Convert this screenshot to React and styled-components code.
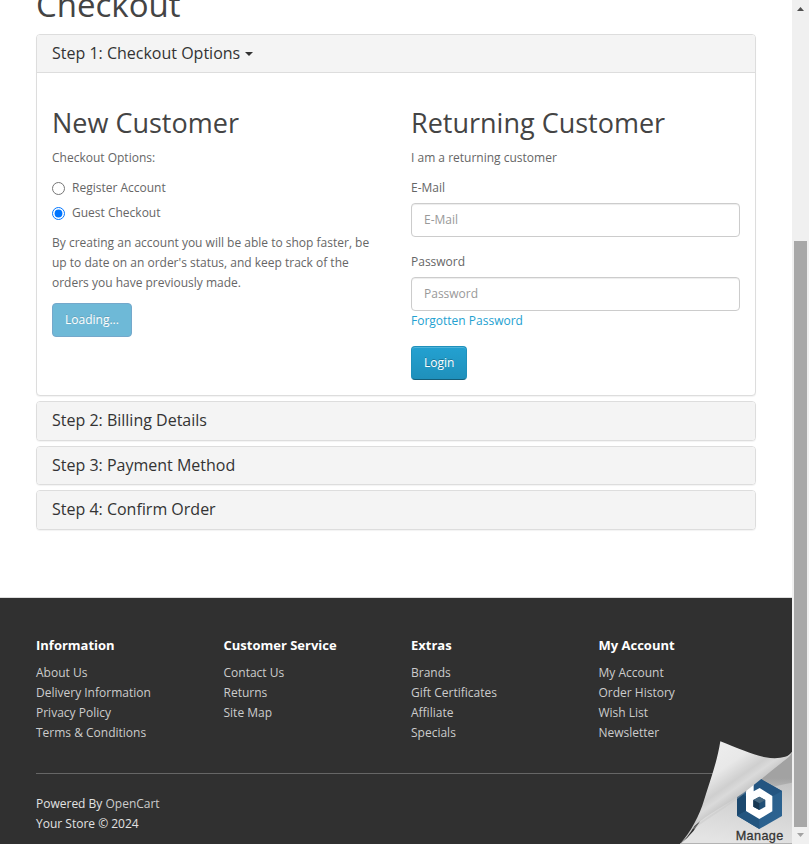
import React from "react";
import styled, { createGlobalStyle, css } from "styled-components";

const GlobalStyle = createGlobalStyle`
  *, *::before, *::after { box-sizing: border-box; }
  html, body { margin: 0; padding: 0; }
  body {
    background: #fff;
    color: #666;
    font-family: "Open Sans", sans-serif;
    font-size: 12px;
    font-weight: 400;
    line-height: 20px;
    overflow: hidden;
  }
`;

const Viewport = styled.div`
  display: flex;
  width: 809px;
  height: 844px;
  overflow: hidden;
`;

const Page = styled.div`
  position: relative;
  display: flex;
  flex-direction: column;
  width: 792px;
  height: 844px;
  overflow: hidden;
`;

const Content = styled.main`
  flex: none;
  height: 597px;
  padding: 0 36px;
`;

const PageTitle = styled.h1`
  margin: -13.3px 0 11px;
  color: #444;
  font-size: 33px;
  font-weight: 400;
  line-height: 1.1;
`;

const Panel = styled.section`
  margin-bottom: 5px;
  border: 1px solid #ddd;
  border-radius: 4px;
  background: #fff;
  box-shadow: 0 1px 1px rgba(0, 0, 0, 0.05);
`;

const PanelHeading = styled.h4`
  display: flex;
  align-items: center;
  margin: 0;
  padding: 10px 15px;
  border-radius: 3px;
  background: #f4f4f4;
  color: #333;
  font-size: 16px;
  font-weight: 400;
  line-height: 1.1;
  ${(p) =>
    p.$open &&
    css`
      padding-bottom: 9.4px;
      border-bottom: 1px solid #ddd;
      border-radius: 3px 3px 0 0;
    `}
`;

const Caret = styled.span`
  margin-left: 4.6px;
  margin-top: 1px;
  border-top: 4px solid #333;
  border-left: 4px solid transparent;
  border-right: 4px solid transparent;
`;

const PanelBody = styled.div`
  display: grid;
  grid-template-columns: 329px 329px;
  column-gap: 30px;
  padding: 15.6px 15px 15px;
`;

const Title = styled.h2`
  margin: 19.2px 0 10.8px;
  color: #444;
  font-size: 27px;
  font-weight: 400;
  line-height: 1.1;
`;

const Paragraph = styled.p`
  margin: 0 0 10px;
`;

const RadioRow = styled.label`
  display: flex;
  height: 20px;
  margin-bottom: ${(p) => (p.$last ? 10 : 5)}px;
`;

const Radio = styled.input`
  width: 13px;
  height: 13px;
  margin: 4px 7px 0 0;
`;

const Field = styled.div`
  margin-bottom: 15px;
`;

const Label = styled.label`
  display: block;
  margin-bottom: 5px;
`;

const Input = styled.input`
  display: block;
  width: 100%;
  height: 34px;
  padding: 5px 12px 7px;
  border: 1px solid #ccc;
  border-radius: 4px;
  background: #fff;
  box-shadow: inset 0 1px 1px rgba(0, 0, 0, 0.075);
  color: #555;
  font: inherit;
  &::placeholder { color: #999; }
`;

const TextLink = styled.a`
  display: block;
  color: #23a1d1;
`;

const Button = styled.button`
  display: block;
  height: 34px;
  padding: 6px 12px;
  border: 1px solid;
  border-color: #1f90bb #1f90bb #145e7a;
  border-radius: 4px;
  background: linear-gradient(#23a1d1, #1f90bb);
  color: #fff;
  font: inherit;
  text-shadow: 0 -1px 0 rgba(0, 0, 0, 0.25);
  box-shadow: inset 0 1px 0 rgba(255, 255, 255, 0.2);
  ${(p) =>
    p.disabled &&
    css`
      opacity: 0.65;
      border-color: #2a7ab0;
      background: #2194c2;
      box-shadow: none;
    `}
`;

const Footer = styled.footer`
  flex: 1;
  padding: 40px 36px 0;
  border-top: 1px solid #ddd;
  border-bottom: 1px solid #2c2126;
  background: #303030;
  color: #e2e2e2;
`;

const FooterGrid = styled.div`
  display: grid;
  grid-template-columns: repeat(4, 187.5px);
`;

const FooterTitle = styled.h5`
  margin: 0 0 10.7px;
  color: #fff;
  font-size: 13px;
  font-weight: 700;
  line-height: 1.1;
`;

const LinkList = styled.ul`
  margin: 0 0 10px;
  padding: 0;
  list-style: none;
`;

const FooterLink = styled.a`
  color: #ccc;
`;

const Rule = styled.hr`
  margin: 20px 0;
  border: 0;
  border-top: 1px solid #666;
`;

const CurlLink = styled.a`
  position: absolute;
  right: 0;
  bottom: 0;
  width: 112px;
  height: 103px;
  svg { display: block; }
`;

const ScrollTrack = styled.div`
  display: flex;
  flex-direction: column;
  align-items: center;
  width: 17px;
  height: 844px;
  background: #f0f0f0;
`;

const ScrollArrow = styled.svg`
  width: 17px;
  height: 17px;
  flex: none;
`;

const ScrollThumb = styled.div`
  width: 13px;
  height: 586px;
  margin-top: 224px;
  background: #a8a8a8;
`;

const footerColumns = [
  ["Information", ["About Us", "Delivery Information", "Privacy Policy", "Terms & Conditions"]],
  ["Customer Service", ["Contact Us", "Returns", "Site Map"]],
  ["Extras", ["Brands", "Gift Certificates", "Affiliate", "Specials"]],
  ["My Account", ["My Account", "Order History", "Wish List", "Newsletter"]],
];

function PageCurl() {
  return (
    <CurlLink aria-label="Manage">
      <svg width="112" height="103" viewBox="30 33 336 309">
        <defs>
          <linearGradient id="under" x1="0.7" y1="0.2" x2="0.55" y2="1">
            <stop offset="0" stopColor="#bdbdbd" />
            <stop offset="0.35" stopColor="#cfcfcf" />
            <stop offset="1" stopColor="#e4e4e4" />
          </linearGradient>
          <linearGradient id="fold" gradientUnits="userSpaceOnUse" x1="135" y1="70" x2="220" y2="190">
            <stop offset="0" stopColor="#ececec" />
            <stop offset="0.35" stopColor="#e8e8e8" />
            <stop offset="0.68" stopColor="#cfcfcf" />
            <stop offset="0.82" stopColor="#dadada" />
            <stop offset="1" stopColor="#c6c6c6" />
          </linearGradient>
          <linearGradient id="shade" x1="0" y1="0" x2="0" y2="1">
            <stop offset="0.7" stopColor="#a2a2a2" />
            <stop offset="1" stopColor="#a2a2a2" stopOpacity="0.35" />
          </linearGradient>
          <linearGradient id="hexBlue" x1="0" y1="0" x2="1" y2="1">
            <stop offset="0" stopColor="#1c4a70" />
            <stop offset="0.5" stopColor="#2a5f8c" />
            <stop offset="1" stopColor="#2d6492" />
          </linearGradient>
        </defs>
        <path d="M366 66L366 342H30Q78 306 100 252L347 86Z" fill="url(#under)" />
        <path d="M366 66L366 158Q320 166 285 178L240 175L349 86Z" fill="url(#shade)" />
        <path d="M269 145L336 183V258L268 297L201 257V184Z" fill="url(#hexBlue)" />
        <path d="M201 184L228 199V243L201 257Z" fill="#1b486e" />
        <path d="M201 257L228 243L268 266V297Z" fill="#23557f" />
        <path d="M269 145L336 183L307 199L251 167V155Z" fill="#245581" />
        <path d="M228 170L251 157V184L269 174L307 198V244L268 267L228 243Z" fill="#fff" />
        <path d="M268 200L286 210V230L268 240L250 230V210Z" fill="#214f76" />
        <path d="M268 200L286 210L268 220L250 210Z" fill="#456780" />
        <path d="M268 220V240L250 230V210Z" fill="#173752" />
        <path d="M151 34C205 55 245 74 286 82C319 88 354 84 366 67C362 78 354 84 344 91C310 117 271 149 231 181C176 222 112 252 73 289C59 313 46 330 30 342C62 307 89 256 102 211C118 157 141 99 151 34Z" fill="url(#fold)" />
        <path d="M70 296C115 258 164 237 231 181" fill="none" stroke="#c6c6c6" strokeWidth="5" opacity="0.4" />
        <path d="M31 341H366" stroke="#aaa" strokeWidth="3" />
        <text x="197" y="330" textLength="143" fill="#333" stroke="#333" strokeWidth="0.8" fontFamily="Liberation Sans, sans-serif" fontSize="38">Manage</text>
      </svg>
    </CurlLink>
  );
}

export default function App() {
  return (
    <Viewport>
      <GlobalStyle />
      <Page>
        <Content>
          <PageTitle>Checkout</PageTitle>
          <Panel>
            <PanelHeading $open>
              Step 1: Checkout Options
              <Caret />
            </PanelHeading>
            <PanelBody>
              <div>
                <Title>New Customer</Title>
                <Paragraph>Checkout Options:</Paragraph>
                <RadioRow>
                  <Radio type="radio" name="account" />
                  Register Account
                </RadioRow>
                <RadioRow $last>
                  <Radio type="radio" name="account" defaultChecked />
                  Guest Checkout
                </RadioRow>
                <Paragraph>
                  By creating an account you will be able to shop faster, be up to date on an
                  order's status, and keep track of the orders you have previously made.
                </Paragraph>
                <Button disabled>Loading...</Button>
              </div>
              <div>
                <Title>Returning Customer</Title>
                <Paragraph>I am a returning customer</Paragraph>
                <Field>
                  <Label htmlFor="email">E-Mail</Label>
                  <Input id="email" placeholder="E-Mail" />
                </Field>
                <Field>
                  <Label htmlFor="password">Password</Label>
                  <Input id="password" type="password" placeholder="Password" />
                  <TextLink>Forgotten Password</TextLink>
                </Field>
                <Button>Login</Button>
              </div>
            </PanelBody>
          </Panel>
          {["Step 2: Billing Details", "Step 3: Payment Method", "Step 4: Confirm Order"].map((step) => (
            <Panel key={step}>
              <PanelHeading>{step}</PanelHeading>
            </Panel>
          ))}
        </Content>
        <Footer>
          <FooterGrid>
            {footerColumns.map(([title, links]) => (
              <div key={title}>
                <FooterTitle>{title}</FooterTitle>
                <LinkList>
                  {links.map((link) => (
                    <li key={link}>
                      <FooterLink>{link}</FooterLink>
                    </li>
                  ))}
                </LinkList>
              </div>
            ))}
          </FooterGrid>
          <Rule />
          <Paragraph>
            Powered By <FooterLink>OpenCart</FooterLink>
            <br />
            Your Store © 2024
          </Paragraph>
        </Footer>
        <PageCurl />
      </Page>
      <ScrollTrack>
        <ScrollArrow viewBox="0 0 17 17">
          <path d="M5 11L8.5 7L12 11Z" fill="#505050" />
        </ScrollArrow>
        <ScrollThumb />
        <ScrollArrow viewBox="0 0 17 17">
          <path d="M5 6L8.5 10L12 6Z" fill="#a3a3a3" />
        </ScrollArrow>
      </ScrollTrack>
    </Viewport>
  );
}
